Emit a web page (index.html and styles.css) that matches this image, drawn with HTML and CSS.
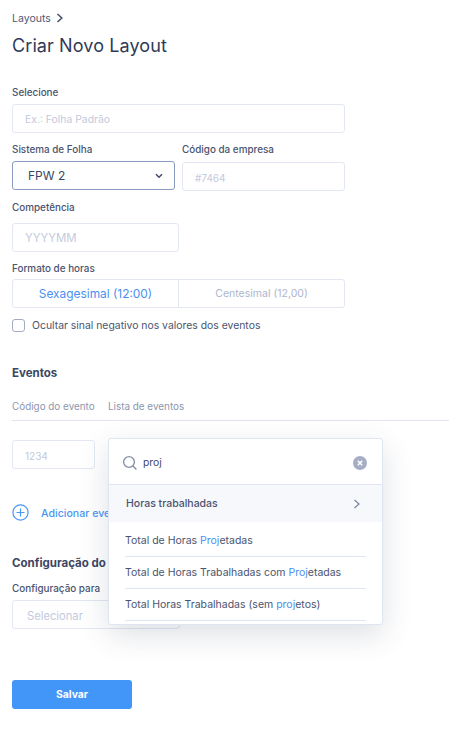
FILE: index.html
```html
<!DOCTYPE html>
<html lang="pt">
<head>
<meta charset="utf-8">
<title>Criar Novo Layout</title>
<link rel="stylesheet" href="styles.css">
</head>
<body>
<main class="page">
  <nav class="crumb">
    <span>Layouts</span>
    <svg class="crumb-icon" width="8" height="10" viewBox="0 0 8 10"><path d="M1.5 1 L5.8 5 L1.5 9" fill="none" stroke="#4a5470" stroke-width="1.6"/></svg>
  </nav>
  <h1 class="title">Criar Novo Layout</h1>

  <label class="label first">Selecione</label>
  <div class="field wide placeholder">Ex.: Folha Padrão</div>

  <div class="two-col">
    <div class="col-a">
      <label class="label">Sistema de Folha</label>
      <div class="field select active">
        <span>FPW 2</span>
        <svg width="8" height="6" viewBox="0 0 8 6"><path d="M1 1.2 L4 4.2 L7 1.2" fill="none" stroke="#3f4a68" stroke-width="1.5"/></svg>
      </div>
    </div>
    <div class="col-b">
      <label class="label">Código da empresa</label>
      <div class="field placeholder small">#7464</div>
    </div>
  </div>

  <label class="label sect">Competência</label>
  <div class="field comp placeholder">YYYYMM</div>

  <label class="label sect-2">Formato de horas</label>
  <div class="segmented">
    <div class="seg seg-on">Sexagesimal (12:00)</div>
    <div class="seg seg-off">Centesimal (12,00)</div>
  </div>

  <div class="check-row">
    <span class="checkbox"></span>
    <span>Ocultar sinal negativo nos valores dos eventos</span>
  </div>

  <h2 class="heading events">Eventos</h2>

  <div class="table-head">
    <span class="th-code">Código do evento</span>
    <span>Lista de eventos</span>
  </div>

  <div class="event-row">
    <div class="field code placeholder small">1234</div>
  </div>

  <div class="add-row">
    <svg width="17" height="17" viewBox="0 0 17 17"><circle cx="8.5" cy="8.5" r="7.6" fill="none" stroke="#4a96f5" stroke-width="1.2"/><path d="M8.5 4.5 V12.5 M4.5 8.5 H12.5" stroke="#4a96f5" stroke-width="1.2"/></svg>
    <span class="add-text">Adicionar evento</span>
  </div>

  <h2 class="heading config">Configuração do layout</h2>
  <label class="label cfg-label">Configuração para</label>
  <div class="field cfg placeholder big">Selecionar</div>

  <button class="save" type="button">Salvar</button>

  <section class="popup">
    <div class="search">
      <svg width="16" height="16" viewBox="0 0 16 16"><circle cx="7" cy="7" r="5.4" fill="none" stroke="#8791a9" stroke-width="1.4"/><path d="M11 11 L14.4 14.4" stroke="#8791a9" stroke-width="1.4"/></svg>
      <span class="query">proj</span>
      <svg class="clear" width="14" height="14" viewBox="0 0 14 14"><circle cx="7" cy="7" r="7" fill="#a5aec4"/><path d="M4.8 4.8 L9.2 9.2 M9.2 4.8 L4.8 9.2" stroke="#fff" stroke-width="1.6"/></svg>
    </div>
    <div class="group">
      <span>Horas trabalhadas</span>
      <svg width="8" height="10" viewBox="0 0 8 10"><path d="M1.5 1 L6 5 L1.5 9" fill="none" stroke="#7a84a0" stroke-width="1.2"/></svg>
    </div>
    <ul class="results">
      <li>Total de Horas <em>Proj</em>etadas</li>
      <li>Total de Horas Trabalhadas com <em>Proj</em>etadas</li>
      <li>Total Horas Trabalhadas (sem <em>proj</em>etos)</li>
    </ul>
  </section>
</main>
</body>
</html>
```
FILE: styles.css
```css
* { box-sizing: border-box; }
html, body { margin: 0; padding: 0; background: #fff; }
body { font-family: "Inter", "Liberation Sans", sans-serif; color: #3f4a68; overflow: hidden; }
.page { position: relative; width: 449px; height: 745px; padding: 12px 0 0 12px; overflow: hidden; }

.crumb { display: flex; align-items: center; gap: 5px; height: 12px; font-size: 10.5px; color: #4f5975; }
.crumb-icon { margin-top: -1px; }
.title { margin: 10px 0 0; font-size: 18px; line-height: 24px; font-weight: 400; color: #2f3a58; letter-spacing: 0.1px; }

.label { display: block; font-size: 9.9px; line-height: 12px; font-weight: 500; color: #4a5470; }
.label.first { margin-top: 28px; }
.field { display: flex; align-items: center; height: 29px; border: 1px solid #e2e7f3; border-radius: 3px; padding-left: 12px; background: #fff; }
.placeholder { padding-top: 2px; font-size: 10.4px; color: #c3cadd; }
.small { font-size: 10px; }
.big { font-size: 11.2px; padding-left: 14px; }
.wide { width: 333px; margin-top: 6px; }

.two-col { display: flex; gap: 7px; margin-top: 10px; }
.col-a { width: 163px; }
.col-b { width: 163px; }
.col-a .field { margin-top: 6px; }
.col-b .field { margin-top: 7px; }
.select { justify-content: space-between; padding: 0 11px 0 15px; font-size: 12px; color: #3a4563; }
.active { border-color: #8a9cc0; }

.sect { margin-top: 10px; }
.comp { width: 167px; margin-top: 10px; padding-top: 0; font-size: 11.4px; }
.sect-2 { margin-top: 10px; }

.segmented { display: flex; width: 333px; height: 29px; margin-top: 5px; border: 1px solid #e2e7f3; border-radius: 3px; }
.seg { flex: 1; display: flex; align-items: center; justify-content: center; }
.seg-on { font-size: 11.9px; color: #4a8ff0; border-right: 1px solid #e2e7f3; }
.seg-off { font-size: 10.5px; color: #aeb6cd; }

.check-row { display: flex; align-items: center; gap: 7px; height: 13px; margin-top: 11px; font-size: 10.4px; color: #4a5470; }
.checkbox { width: 13px; height: 13px; border: 1px solid #a3abc0; border-radius: 3px; }

.heading { margin: 0; font-size: 11.5px; line-height: 14px; font-weight: 700; color: #3b4662; }
.events { margin-top: 34px; }

.table-head { display: flex; height: 21px; margin-top: 20px; line-height: 12px; font-size: 9.9px; color: #8d96ae; border-bottom: 1px solid #e2e5ee; }
.th-code { width: 96px; }

.event-row { margin-top: 19px; }
.code { width: 83px; }

.add-row { display: flex; align-items: center; gap: 12px; height: 17px; margin-top: 35px; font-size: 10.6px; font-weight: 500; color: #4a96f5; }
.add-text { padding-top: 1px; white-space: nowrap; }

.config { margin-top: 35px; white-space: nowrap; }
.cfg-label { margin-top: 12px; }
.cfg { width: 168px; margin-top: 6px; }

.save { display: block; width: 120px; height: 29px; margin-top: 51px; border: 0; border-radius: 3px; background: #4296f7; color: #fff; font: 700 10.4px "Inter", "Liberation Sans", sans-serif; }

.popup { position: absolute; left: 108px; top: 438px; width: 275px; height: 187px; background: #fff; border: 1px solid #e0e5f2; border-radius: 3px; box-shadow: 0 10px 30px rgba(50, 60, 90, 0.16); overflow: hidden; }
.search { display: flex; align-items: center; height: 46px; padding: 2px 15px 0 13px; border-bottom: 1px solid #e0e5f2; }
.query { flex: 1; margin-left: 5px; font-size: 10.4px; color: #3f4a68; }
.group { display: flex; align-items: center; justify-content: space-between; height: 37px; padding: 0 21px 0 17px; background: #f6f8fb; font-size: 10.5px; font-weight: 500; color: #4a5470; }
.results { list-style: none; margin: 0; padding: 2px 16px 0 16px; }
.results li { height: 32px; padding-top: 9px; line-height: 13px; font-size: 10.5px; color: #4a5470; border-bottom: 1px solid #e0e5f2; }
.results li:first-child { height: 33px; padding-top: 10px; }
.results em { font-style: normal; color: #4a8ff0; }
```
